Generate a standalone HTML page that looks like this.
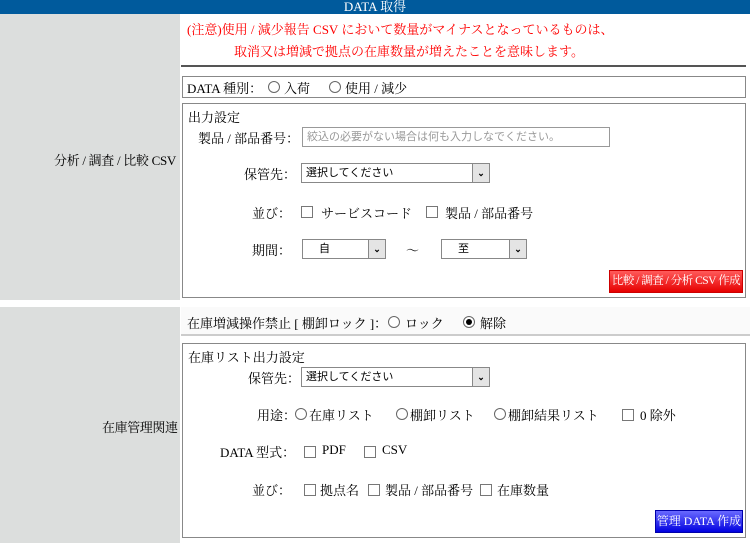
<!DOCTYPE html>
<html><head><meta charset="utf-8"><style>
*{margin:0;padding:0;box-sizing:border-box}
body{width:750px;height:543px;background:#fff;font-family:"Liberation Serif","Noto Serif CJK SC","Noto Sans CJK JP",serif;font-size:13px;color:#000;position:relative;overflow:hidden}
.a{position:absolute;white-space:nowrap}
.hdr{left:0;top:0;width:750px;height:14px;background:#005a9c;color:#fff;text-align:center;line-height:14px;font-size:13px}
.left{left:0;width:180px;background:#dcdedd}
.box{border:1px solid #888;background:#fff}
.sel{border:1px solid #888;background:#fff;height:20px;font-size:11px;line-height:18px;padding-left:4px;font-family:"Liberation Sans","Noto Sans CJK JP",sans-serif}
.sel b{position:absolute;right:0;top:0;width:17px;height:18px;background:#e4e4e4;border-left:1px solid #888;font-size:9px;text-align:center;line-height:18px}
.cb{position:absolute;width:12px;height:12px;border:1px solid #777;background:#fff;margin-top:1px}
.rd{position:absolute;width:12px;height:12px;border:1px solid #666;border-radius:50%;background:#fff}
.rd.on::after{content:"";position:absolute;left:2px;top:2px;width:6px;height:6px;border-radius:50%;background:#000}
.red{color:#f00}
</style></head><body>
<div class="a hdr">DATA 取得</div>
<div class="a left" style="top:14px;height:286px"></div>
<div class="a left" style="top:307px;height:236px"></div>
<div class="a" style="left:54px;top:150px;letter-spacing:-0.3px">分析 / 調査 / 比較 CSV</div>
<div class="a" style="left:102px;top:417px;letter-spacing:-0.4px">在庫管理関連</div>

<div class="a red" style="left:187px;top:19px">(注意)使用 / 減少報告 CSV において数量がマイナスとなっているものは、</div>
<div class="a red" style="left:234px;top:41px">取消又は増減で拠点の在庫数量が増えたことを意味します。</div>
<div class="a" style="left:181px;top:65px;width:565px;height:2px;background:#555"></div>

<div class="a box" style="left:182px;top:76px;width:564px;height:22px"></div>
<div class="a" style="left:187px;top:78px">DATA 種別：</div>
<span class="rd" style="left:268px;top:81px"></span><div class="a" style="left:284px;top:78px">入荷</div>
<span class="rd" style="left:329px;top:81px"></span><div class="a" style="left:345px;top:78px">使用 / 減少</div>

<div class="a box" style="left:182px;top:103px;width:564px;height:195px"></div>
<div class="a" style="left:188px;top:107px">出力設定</div>
<div class="a" style="left:198px;top:128px">製品 / 部品番号：</div>
<div class="a" style="left:302px;top:127px;width:308px;height:20px;border:1px solid #999;color:#999;font-size:11px;line-height:18px;padding-left:4px;font-family:'Liberation Sans','Noto Sans CJK JP',sans-serif">絞込の必要がない場合は何も入力しなでください。</div>
<div class="a" style="left:244px;top:164px">保管先：</div>
<div class="a sel" style="left:301px;top:163px;width:189px">選択してください<b>⌄</b></div>
<div class="a" style="left:252px;top:203px">並び：</div>
<span class="cb" style="left:301px;top:205px"></span><div class="a" style="left:321px;top:203px">サービスコード</div>
<span class="cb" style="left:426px;top:205px"></span><div class="a" style="left:445px;top:203px">製品 / 部品番号</div>
<div class="a" style="left:252px;top:240px">期間：</div>
<div class="a sel" style="left:302px;top:239px;width:84px;padding-left:16px">自<b>⌄</b></div>
<div class="a" style="left:406px;top:240px">〜</div>
<div class="a sel" style="left:441px;top:239px;width:86px;padding-left:16px">至<b>⌄</b></div>
<div class="a" style="left:609px;top:270px;width:134px;height:23px;background:linear-gradient(#ff5a5a,#e60000);border:1px solid #c00;color:#fff;font-size:11.5px;line-height:21px;text-align:center;letter-spacing:-0.5px">比較 / 調査 / 分析 CSV 作成</div>

<div class="a" style="left:181px;top:307px;width:569px;height:29px;background:#fafafa;border-bottom:2px solid #ccc"></div>
<div class="a" style="left:187px;top:313px">在庫増減操作禁止 [ 棚卸ロック ]：</div>
<span class="rd" style="left:388px;top:316px"></span><div class="a" style="left:405px;top:313px">ロック</div>
<span class="rd on" style="left:463px;top:316px"></span><div class="a" style="left:480px;top:313px">解除</div>

<div class="a box" style="left:182px;top:343px;width:564px;height:195px"></div>
<div class="a" style="left:188px;top:347px">在庫リスト出力設定</div>
<div class="a" style="left:248px;top:368px">保管先：</div>
<div class="a sel" style="left:301px;top:367px;width:189px">選択してください<b>⌄</b></div>
<div class="a" style="left:257px;top:405px">用途：</div>
<span class="rd" style="left:295px;top:408px"></span><div class="a" style="left:309px;top:405px">在庫リスト</div>
<span class="rd" style="left:396px;top:408px"></span><div class="a" style="left:410px;top:405px">棚卸リスト</div>
<span class="rd" style="left:494px;top:408px"></span><div class="a" style="left:508px;top:405px">棚卸結果リスト</div>
<span class="cb" style="left:622px;top:408px"></span><div class="a" style="left:640px;top:405px">0 除外</div>
<div class="a" style="left:220px;top:442px">DATA 型式：</div>
<span class="cb" style="left:304px;top:445px"></span><div class="a" style="left:322px;top:442px">PDF</div>
<span class="cb" style="left:364px;top:445px"></span><div class="a" style="left:382px;top:442px">CSV</div>
<div class="a" style="left:252px;top:480px">並び：</div>
<span class="cb" style="left:304px;top:483px"></span><div class="a" style="left:320px;top:480px">拠点名</div>
<span class="cb" style="left:368px;top:483px"></span><div class="a" style="left:385px;top:480px">製品 / 部品番号</div>
<span class="cb" style="left:480px;top:483px"></span><div class="a" style="left:497px;top:480px">在庫数量</div>
<div class="a" style="left:655px;top:510px;width:88px;height:23px;background:linear-gradient(#6a6aff,#0000e0);border:1px solid #00a;color:#fff;font-size:12px;line-height:21px;text-align:center">管理 DATA 作成</div>
</body></html>
